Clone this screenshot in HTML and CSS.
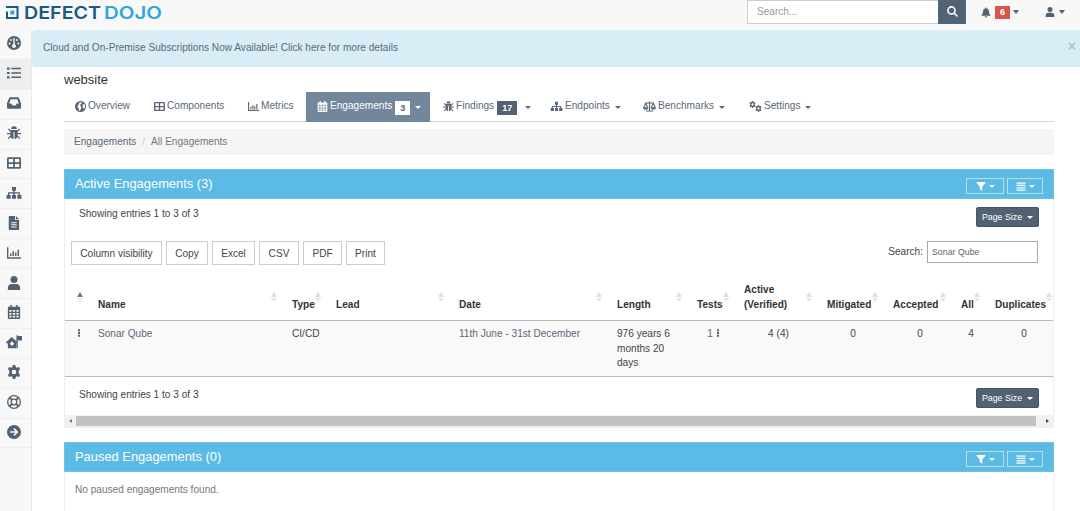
FILE: index.html
```html
<!DOCTYPE html>
<html lang="en">
<head>
    <meta charset="UTF-8">
    <meta name="viewport" content="width=device-width, initial-scale=1.0">
    <title>website | DefectDojo</title>
    <link rel="stylesheet" href="styles.css">
</head>
<body>
    <!-- Icon sprite -->
    <svg class="sprite" xmlns="http://www.w3.org/2000/svg">
        <symbol id="i-dashboard" viewBox="0 0 16 16">
            <circle cx="8" cy="8" r="8"/>
            <g fill="#f8f8f8"><circle cx="3" cy="8.6" r="1.1"/><circle cx="4.6" cy="4.5" r="1.1"/><circle cx="11.4" cy="4.5" r="1.1"/><circle cx="13" cy="8.6" r="1.1"/><path d="M7.2 2.2h1.6v7.3a2.2 2.2 0 1 1-1.6 0z"/></g>
        </symbol>
        <symbol id="i-list" viewBox="0 0 16 16"><path d="M0 1.8h3v2.4H0zM5 2.1h11v1.7H5zM0 6.8h3v2.4H0zM5 7.1h11v1.7H5zM0 11.8h3v2.4H0zM5 12.1h11v1.7H5z"/></symbol>
        <symbol id="i-inbox" viewBox="0 0 16 16"><path fill-rule="evenodd" d="M3.8 1.5h8.4c.7 0 1.2.3 1.5 1L16 8.3V13c0 1-.7 1.7-1.7 1.7H1.7C.7 14.7 0 14 0 13V8.3l2.3-5.8c.3-.7.8-1 1.5-1zM4.2 3.6 2.4 8.5H5l1.2 2.3h3.6L11 8.5h2.6l-1.8-4.9z"/></symbol>
        <symbol id="i-bug" viewBox="0 0 16 16">
            <path d="M4.8 3.5a3.2 3.2 0 0 1 6.4 0zM4 4.5h8V11a4 3.9 0 0 1-3.4 3.9V6.8H7.4v8.1A4 3.9 0 0 1 4 11z"/>
            <path fill="none" stroke="currentColor" stroke-width="1.5" d="m4.500 6.300-3-3M11.500 6.300l3-3M0 8.800h4.500M11.500 8.800H16M4.500 11l-3 3.500M11.500 11l3 3.500"/>
        </symbol>
        <symbol id="i-table" viewBox="0 0 16 16"><path fill-rule="evenodd" d="M1.500 1.300h13c.8 0 1.500.7 1.500 1.500v10.400c0 .8-.7 1.500-1.500 1.500h-13C.7 14.700 0 14 0 13.200V2.800c0-.8.7-1.500 1.500-1.500zM2 3.300v3.800h5V3.300zm7 0v3.800h5V3.300zM2 9v3.700h5V9zm7 0v3.700h5V9z"/></symbol>
        <symbol id="i-sitemap" viewBox="0 0 18 16"><path d="M6.700 1h4.600v4.300H9.800v1.900h6v3h1.700v4.500h-4.700v-4.500h1.500V8.700H9.800v1.500h1.500v4.500H6.700v-4.500h1.500V8.700H3.700v1.500h1.500v4.500H.5v-4.500h1.700v-3h6V5.300H6.700z"/></symbol>
        <symbol id="i-file" viewBox="0 0 16 16"><path fill-rule="evenodd" d="M3.200 0h6v4.500h4.600v10.300c0 .7-.5 1.200-1.200 1.200H3.200C2.500 16 2 15.500 2 14.800V1.200C2 .5 2.500 0 3.200 0zM10.200 0l3.600 3.600h-3.600zM4.800 7v1.200H11V7zm0 2.500v1.200H11V9.500zm0 2.500v1.200H11V12z"/></symbol>
        <symbol id="i-chart" viewBox="0 0 16 16"><path d="M0 1.500h1.600v11.300H16v1.700H0zM3.500 8.500h1.700v3H3.500zM6.300 6H8v5.500H6.300zM9.100 7.500h1.700v4H9.100zM12 4.200h1.700v7.300H12z"/></symbol>
        <symbol id="i-user" viewBox="0 0 16 16"><circle cx="8" cy="4" r="4"/><path d="M1 16v-2.500a4.600 4.600 0 0 1 4.600-4.300h4.800A4.600 4.600 0 0 1 15 13.500V16z"/></symbol>
        <symbol id="i-calendar" viewBox="0 0 16 16"><path fill-rule="evenodd" d="M3.700 0h1.800v2h5V0h1.800v2h1.500c.7 0 1.200.5 1.200 1.200v11.600c0 .7-.5 1.200-1.200 1.200H2.200C1.500 16 1 15.500 1 14.800V3.200C1 2.500 1.500 2 2.200 2h1.500zM2.700 5.600v2.100h2.500V5.600zm4 0v2.100h2.600V5.600zm4.100 0v2.100h2.500V5.600zM2.700 9v2.100h2.500V9zm4 0v2.100h2.600V9zm4.100 0v2.100h2.500V9zM2.700 12.300v2h2.500v-2zm4 0v2h2.600v-2zm4.100 0v2h2.500v-2z"/></symbol>
        <symbol id="i-home" viewBox="0 0 19 16"><path fill-rule="evenodd" d="M6.800 2 12.400 7V0H14v1h5v5.200h-5v9.300H2.200V9.600H0V8.300zM7.200 7.200 4.600 10l2.600 2.800L9.800 10zM12.400 9.500v6h.4v-6z"/></symbol>
        <symbol id="i-cog" viewBox="0 0 16 16"><path fill-rule="evenodd" d="M6.600 0h2.800l.5 2.200 1.500.9 2.200-.7L15 4.800l-1.600 1.600v3.200l1.600 1.600-1.400 2.400-2.200-.7-1.500.9L9.400 16H6.600l-.5-2.200-1.500-.9-2.200.7L1 11.200l1.600-1.600V6.400L1 4.800l1.400-2.400 2.200.7 1.500-.9zM8 5.400a2.600 2.600 0 1 0 0 5.200 2.600 2.600 0 0 0 0-5.200z"/></symbol>
        <symbol id="i-ring" viewBox="0 0 16 16"><g fill="none" stroke="currentColor"><circle cx="8" cy="8" r="7.200" stroke-width="1.500"/><circle cx="8" cy="8" r="3.200" stroke-width="1.500"/><path stroke-width="2.200" d="m3 3 2.800 2.800M13 3l-2.800 2.800M3 13l2.800-2.800M13 13l-2.800-2.800"/></g></symbol>
        <symbol id="i-arrow" viewBox="0 0 16 16"><circle cx="8" cy="8" r="8"/><path fill="none" stroke="#f8f8f8" stroke-width="1.800" d="M3.500 8h8M8 4.200 11.800 8 8 11.800"/></symbol>
        <symbol id="i-search" viewBox="0 0 16 16"><circle cx="6.500" cy="6.500" r="5.200" fill="none" stroke="currentColor" stroke-width="2.300"/><path d="m9.500 11 1.500-1.500 5 4.800-1.700 1.700z"/></symbol>
        <symbol id="i-bell" viewBox="0 0 16 16"><path d="M7.200 0h1.600v1.200a4.800 4.800 0 0 1 4 4.800c0 3.500.8 4.500 2.200 6v1.200H1V12c1.400-1.500 2.200-2.500 2.200-6a4.800 4.800 0 0 1 4-4.800zM6 14h4a2 2 0 0 1-4 0z"/></symbol>
        <symbol id="i-globe" viewBox="0 0 16 16"><circle cx="8" cy="8" r="8"/><path fill="#fff" d="M6.500 2.200 9 1.500l.8 1.800L8 4.800l-.5 2L9.200 9l-.5 2.500-2 2.800-1.200-.3.200-3L3.500 8.800l.8-2 1.400-2zM11.500 5l2-.8 1 2.300.2 3-1.700 2.200-1-2.200-1.200-1.500z"/></symbol>
        <symbol id="i-scale" viewBox="0 0 20 16"><path fill="none" stroke="currentColor" stroke-width="1.700" d="M10 0v14.500M4.500 15h11M3 2.600h14M1 9.500l3.200-6.300 3.200 6.300M12.600 9.500l3.200-6.300L19 9.500"/><path d="M0 9.200h8.400a4.200 3.800 0 0 1-8.400 0zM11.600 9.200H20a4.200 3.800 0 0 1-8.400 0z"/></symbol>
        <symbol id="i-filter" viewBox="0 0 16 16"><path d="M1 0h14c1 0 1.200 1 .6 1.600L10.300 8v8L5.700 12.500V8L.4 1.600C-.2 1 0 0 1 0z"/></symbol>
        <symbol id="i-bars" viewBox="0 0 16 16"><path d="M0 1h16v2.200H0zM0 5.100h16v2.200H0zM0 9.200h16v2.200H0zM0 13.300h16v2.200H0z"/></symbol>
        <symbol id="i-dots" viewBox="0 0 6 16"><path d="M1 .5h4v4H1zM1 6h4v4H1zM1 11.500h4v4H1z"/></symbol>
    </svg>

    <header class="navbar">
        <a class="brand" href="#">
            <svg width="158" height="22" viewBox="0 -4 158 22">
                <path class="brand-dark" d="M0 0h12.500v13H0V5.500h2V11h8.500V2H0z"/>
                <path class="brand-light" d="M4.300 4.500h4v4h-4z"/>
                <text class="brand-dark" x="18" y="13" textLength="77" lengthAdjust="spacingAndGlyphs">DEFECT</text>
                <text class="brand-light" x="98" y="13" textLength="58" lengthAdjust="spacingAndGlyphs">DOJO</text>
            </svg>
        </a>
        <form class="nav-search">
            <input type="text" placeholder="Search...">
            <button type="button" aria-label="Search"><svg class="icon"><use href="#i-search"/></svg></button>
        </form>
        <a class="nav-link alerts" href="#"><svg class="icon"><use href="#i-bell"/></svg><span class="alert-count">6</span><i class="caret"></i></a>
        <a class="nav-link account" href="#"><svg class="icon"><use href="#i-user"/></svg><i class="caret"></i></a>
    </header>

    <div class="wrapper">
        <nav class="sidebar">
            <a href="#"><svg class="icon"><use href="#i-dashboard"/></svg></a>
            <a href="#" class="active"><svg class="icon"><use href="#i-list"/></svg></a>
            <a href="#"><svg class="icon"><use href="#i-inbox"/></svg></a>
            <a href="#"><svg class="icon"><use href="#i-bug"/></svg></a>
            <a href="#"><svg class="icon"><use href="#i-table"/></svg></a>
            <a href="#"><svg class="icon wide"><use href="#i-sitemap"/></svg></a>
            <a href="#"><svg class="icon"><use href="#i-file"/></svg></a>
            <a href="#"><svg class="icon"><use href="#i-chart"/></svg></a>
            <a href="#"><svg class="icon"><use href="#i-user"/></svg></a>
            <a href="#"><svg class="icon"><use href="#i-calendar"/></svg></a>
            <a href="#"><svg class="icon wide"><use href="#i-home"/></svg></a>
            <a href="#"><svg class="icon"><use href="#i-cog"/></svg></a>
            <a href="#"><svg class="icon"><use href="#i-ring"/></svg></a>
            <a href="#"><svg class="icon"><use href="#i-arrow"/></svg></a>
        </nav>

        <div class="page">
            <div class="banner">
                <a href="#">Cloud and On-Premise Subscriptions Now Available! Click here for more details</a>
                <span class="close">×</span>
            </div>

            <main class="content">
                <h3>website</h3>
                <ul class="tabs">
                    <li class="tab-overview"><svg class="icon"><use href="#i-globe"/></svg><span>Overview</span></li>
                    <li class="tab-components"><svg class="icon"><use href="#i-table"/></svg><span>Components</span></li>
                    <li class="tab-metrics"><svg class="icon"><use href="#i-chart"/></svg><span>Metrics</span></li>
                    <li class="tab-engagements active"><svg class="icon"><use href="#i-calendar"/></svg><span>Engagements</span><b class="badge">3</b><i class="caret"></i></li>
                    <li class="tab-findings"><svg class="icon"><use href="#i-bug"/></svg><span>Findings</span><b class="badge">17</b><i class="caret"></i></li>
                    <li class="tab-endpoints"><svg class="icon wide"><use href="#i-sitemap"/></svg><span>Endpoints</span><i class="caret"></i></li>
                    <li class="tab-benchmarks"><svg class="icon wide"><use href="#i-scale"/></svg><span>Benchmarks</span><i class="caret"></i></li>
                    <li class="tab-settings">
                        <span class="cogs"><svg class="icon"><use href="#i-cog"/></svg><svg class="icon"><use href="#i-cog"/></svg></span><span>Settings</span><i class="caret"></i>
                    </li>
                </ul>

                <div class="breadcrumb">
                    <a href="#">Engagements</a><span class="slash">/</span><span>All Engagements</span>
                </div>

                <section class="panel">
                    <div class="panel-heading">
                        <h4>Active Engagements (3)</h4>
                        <button class="heading-button filter"><svg class="icon"><use href="#i-filter"/></svg><i class="caret"></i></button>
                        <button class="heading-button"><svg class="icon"><use href="#i-bars"/></svg><i class="caret"></i></button>
                    </div>
                    <div class="entries">
                        <span>Showing entries 1 to 3 of 3</span>
                        <button class="page-size">Page Size<i class="caret"></i></button>
                    </div>
                    <div class="tools">
                        <button class="w-column">Column visibility</button>
                        <button class="w-copy">Copy</button>
                        <button class="w-excel">Excel</button>
                        <button class="w-csv">CSV</button>
                        <button class="w-pdf">PDF</button>
                        <button class="w-print">Print</button>
                        <label>Search:<input type="text" value="Sonar Qube"></label>
                    </div>
                    <div class="table-wrap">
                        <table>
                            <colgroup>
                                <col class="c-menu"><col class="c-name"><col class="c-type"><col class="c-lead"><col class="c-date"><col class="c-length"><col class="c-tests"><col class="c-active"><col class="c-mitigated"><col class="c-accepted"><col class="c-all"><col class="c-dup">
                            </colgroup>
                            <thead>
                                <tr>
                                    <th class="sorted"></th>
                                    <th>Name</th>
                                    <th>Type</th>
                                    <th>Lead</th>
                                    <th>Date</th>
                                    <th>Length</th>
                                    <th>Tests</th>
                                    <th>Active<br>(Verified)</th>
                                    <th>Mitigated</th>
                                    <th>Accepted</th>
                                    <th>All</th>
                                    <th>Duplicates</th>
                                </tr>
                            </thead>
                            <tbody>
                                <tr>
                                    <td class="menu"><svg class="dots"><use href="#i-dots"/></svg></td>
                                    <td><a href="#">Sonar Qube</a></td>
                                    <td>CI/CD</td>
                                    <td></td>
                                    <td><a href="#">11th June - 31st December</a></td>
                                    <td>976 years 6<br>months 20<br>days</td>
                                    <td class="num"><a href="#">1</a> <svg class="dots"><use href="#i-dots"/></svg></td>
                                    <td class="num">4 (4)</td>
                                    <td class="num">0</td>
                                    <td class="num">0</td>
                                    <td class="num">4</td>
                                    <td class="num">0</td>
                                </tr>
                            </tbody>
                        </table>
                    </div>
                    <div class="entries bottom">
                        <span>Showing entries 1 to 3 of 3</span>
                        <button class="page-size">Page Size<i class="caret"></i></button>
                    </div>
                    <div class="scrollbar">
                        <i class="arrow left"></i>
                        <div class="thumb"></div>
                        <i class="arrow right"></i>
                    </div>
                </section>

                <section class="panel paused">
                    <div class="panel-heading">
                        <h4>Paused Engagements (0)</h4>
                        <button class="heading-button filter"><svg class="icon"><use href="#i-filter"/></svg><i class="caret"></i></button>
                        <button class="heading-button"><svg class="icon"><use href="#i-bars"/></svg><i class="caret"></i></button>
                    </div>
                    <p>No paused engagements found.</p>
                </section>
            </main>
        </div>
    </div>
</body>
</html>
```
FILE: styles.css
```css
* {
    margin: 0;
    padding: 0;
    box-sizing: border-box;
}

body {
    height: 511px;
    overflow: hidden;
    background: #fff;
    color: #444;
    font-family: "Liberation Sans", Arial, sans-serif;
    font-size: 10.1px;
    line-height: 14.5px;
}

a {
    color: #5b6877;
    text-decoration: none;
}

button,
input {
    font-family: inherit;
    font-size: inherit;
    color: inherit;
}

.sprite {
    display: none;
}

.icon {
    width: 14px;
    height: 14px;
    flex: none;
    fill: currentColor;
}

.caret {
    display: inline-block;
    width: 0;
    height: 0;
    flex: none;
    border: 3px solid transparent;
    border-top-color: currentColor;
    border-bottom: 0;
}

/* Top bar */
.navbar {
    display: flex;
    align-items: flex-start;
    height: 30px;
    background: #f8f8f8;
    color: #526272;
}

.brand {
    height: 22px;
    margin: 2px 583px 0 6px;
}

.brand svg {
    display: block;
}

.brand text {
    font-family: "Inter", sans-serif;
    font-size: 17.8px;
    font-weight: 600;
}

.brand-dark {
    fill: #1b5a80;
}

.brand-light {
    fill: #2fa8d8;
}

.nav-search {
    display: flex;
    width: 219px;
    height: 24px;
}

.nav-search input {
    width: 191px;
    padding: 0 9px 1px;
    border: 1px solid #ccc;
    border-right: 0;
    background: #fff;
    outline: none;
}

.nav-search input::placeholder {
    color: #999;
}

.nav-search button {
    width: 28px;
    border: 1px solid #3f6d8f;
    border-top: 0;
    background: #526272;
    color: #fff;
}

.nav-search button .icon {
    display: block;
    width: 11px;
    height: 11px;
    margin: 0 auto;
}

.nav-link {
    display: flex;
    align-items: center;
    height: 24px;
    color: #526272;
}

.nav-link .caret {
    border-width: 4px 3.5px 0;
}

.alerts {
    margin-left: 15px;
}

.alerts .icon {
    width: 10px;
    height: 11px;
}

.alert-count {
    width: 15px;
    height: 13px;
    margin: 0 3px 0 4px;
    background: #d9534f;
    color: #fff;
    font-size: 9px;
    font-weight: bold;
    line-height: 13px;
    text-align: center;
}

.account {
    gap: 4px;
    margin-left: 26px;
}

.account .icon {
    width: 10px;
    height: 10px;
}

.wrapper {
    display: flex;
    height: 481px;
}

.sidebar {
    width: 32px;
    flex: none;
    border-right: 1px solid #e9e9e9;
    background: #f8f8f8;
}

.sidebar a {
    display: flex;
    justify-content: center;
    align-items: center;
    height: 29.9px;
    padding: 0 4px 2px 0;
    border-bottom: 1px solid #efefef;
    color: #526272;
}

.sidebar a.active {
    background: #eee;
}

.sidebar .wide {
    width: 16px;
}

.page {
    flex: 1;
    min-width: 0;
}

.banner {
    display: flex;
    justify-content: space-between;
    height: 37px;
    padding: 11px 4px 0 11px;
    border-bottom: 1px solid #cfe8f0;
    border-radius: 3px 0 0 3px;
    background: #d9edf7;
}

.close {
    color: #adc3cd;
    font-size: 14px;
    font-weight: bold;
    line-height: 11px;
}

.content {
    width: 990px;
    margin-left: 32px;
}

.content h3 {
    height: 25px;
    padding-top: 5px;
    color: #333;
    font-size: 13px;
    font-weight: normal;
    line-height: 16px;
}

/* Product tabs */
.tabs {
    display: flex;
    height: 30px;
    border-bottom: 1px solid #d5d9de;
    list-style: none;
}

.tabs li {
    display: flex;
    align-items: center;
    height: 30px;
    padding: 0 0 1px 11px;
    color: #5b6877;
    white-space: nowrap;
}

.tabs .icon {
    width: 11px;
    height: 11px;
    margin-right: 2px;
}

.tabs .wide {
    width: 13px;
}

.tabs .caret {
    margin: 2px 0 0 5px;
}

.tabs .active {
    background: #73879c;
    color: #fff;
}

.tabs .badge {
    height: 14px;
    margin: 2px 3px 0;
    padding: 0 5px;
    background: #526272;
    color: #fff;
    font-size: 9px;
    line-height: 14px;
}

.tabs .active .badge {
    margin-right: 0;
    background: #fff;
    color: #526272;
}

.tab-overview { width: 79px; }
.tab-components { width: 94px; }
.tab-metrics { width: 69px; }
.tab-engagements { width: 124px; }
.tabs .tab-findings { width: 108px; padding-left: 13px; }
.tabs .tab-endpoints { width: 94px; padding-left: 12px; }
.tabs .tab-benchmarks { width: 105px; }
.tabs .tab-settings { padding-left: 12px; }

.cogs {
    display: flex;
    margin-right: 2px;
}

.tabs .cogs .icon {
    width: 7px;
    height: 7px;
    margin: 0;
}

.tabs .cogs .icon + .icon {
    margin: 4px 0 0 -1px;
}

.breadcrumb {
    height: 26px;
    margin-top: 7px;
    padding: 6px 10px;
    background: #f5f5f5;
    color: #777;
}

.breadcrumb .slash {
    margin: 0 6px;
    color: #ccc;
}

/* Panels */
.panel {
    height: 259px;
    margin-top: 14px;
    border: 1px solid #eee;
    border-top: 0;
}

.panel-heading {
    display: flex;
    gap: 3px;
    height: 30px;
    margin: 0 -1px;
    padding: 8px 10px 0;
    border: 1px solid #6fc1e0;
    background: #5bbbe5;
    color: #fff;
}

.panel-heading h4 {
    flex: 1;
    margin-top: -2px;
    font-size: 12.9px;
    font-weight: normal;
    line-height: 16px;
}

.heading-button {
    display: flex;
    justify-content: center;
    align-items: center;
    gap: 3px;
    width: 36px;
    height: 16px;
    border: 1px solid #b5e0ea;
    background: transparent;
}

.heading-button.filter {
    width: 38px;
}

.heading-button .icon {
    width: 10px;
    height: 9px;
}

.entries {
    display: flex;
    justify-content: space-between;
    height: 42px;
    padding: 8px 14px 0;
}

.page-size {
    display: flex;
    justify-content: center;
    align-items: center;
    gap: 5px;
    width: 63px;
    height: 20px;
    border: 1px solid #475564;
    border-radius: 2px;
    background: #526272;
    color: #fff;
    font-size: 8.8px;
}

.tools {
    display: flex;
    height: 42px;
    padding: 0 15px 0 6px;
}

.tools button {
    height: 24px;
    margin-right: 4px;
    border: 1px solid #ccc;
    background: #fff;
}

.w-column { width: 91px; }
.w-copy { width: 42px; }
.w-excel { width: 43px; }
.w-csv { width: 40px; }
.w-pdf { width: 39px; }
.w-print { width: 39px; }

.tools label {
    display: flex;
    gap: 4px;
    margin-left: auto;
    line-height: 21px;
}

.tools input {
    width: 111px;
    height: 22px;
    padding: 0 4px;
    border: 1px solid #aaa;
    color: #666;
    font-size: 8.8px;
}

.table-wrap {
    height: 94px;
    overflow: hidden;
}

table {
    width: 997px;
    margin-left: -1px;
    border-collapse: separate;
    border-spacing: 0;
    table-layout: fixed;
}

th {
    position: relative;
    height: 38px;
    padding: 0 0 8px 6px;
    border-bottom: 1px solid #bbb;
    color: #333;
    text-align: left;
    vertical-align: bottom;
    white-space: nowrap;
}

/* Sort arrows in the corner of each header cell */
th::before,
th::after {
    content: "";
    position: absolute;
    right: 9px;
    bottom: 23px;
    border: 3px solid transparent;
    border-top: 0;
    border-bottom: 5px solid #ddd;
}

th::after {
    bottom: 18px;
    border-top: 4px solid #e8e8e8;
    border-bottom: 0;
}

th.sorted::before {
    border-bottom-color: #777;
}

td {
    height: 56px;
    padding: 6px 0 5px 6px;
    border-bottom: 1px solid #bbb;
    background: #f9f9f9;
    vertical-align: top;
    white-space: nowrap;
}

td.num {
    padding-right: 2px;
    padding-left: 0;
    text-align: center;
}

td.menu {
    padding-left: 13px;
}

.dots {
    width: 4px;
    height: 8px;
    fill: #526272;
}

.c-menu { width: 28px; }
.c-name { width: 194px; }
.c-type { width: 44px; }
.c-lead { width: 123px; }
.c-date { width: 158px; }
.c-length { width: 80px; }
.c-tests { width: 47px; }
.c-active { width: 83px; }
.c-mitigated { width: 66px; }
.c-accepted { width: 68px; }
.c-all { width: 34px; }
.c-dup { width: 72px; }

.entries.bottom {
    height: 38px;
    padding-top: 11px;
}

.scrollbar {
    display: flex;
    align-items: center;
    height: 12px;
    padding: 0 4px;
    background: #f1f1f1;
}

.thumb {
    flex: 1;
    height: 10px;
    margin: 0 10px 0 4px;
    background: #c1c1c1;
}

.arrow {
    border: 2.5px solid transparent;
}

.arrow.left {
    border-left: 0;
    border-right: 3px solid #777;
}

.arrow.right {
    border-right: 0;
    border-left: 3px solid #444;
}

.panel.paused {
    height: 69px;
    border-bottom: 0;
}

.panel.paused p {
    padding: 11px 10px;
    color: #777;
}
```
